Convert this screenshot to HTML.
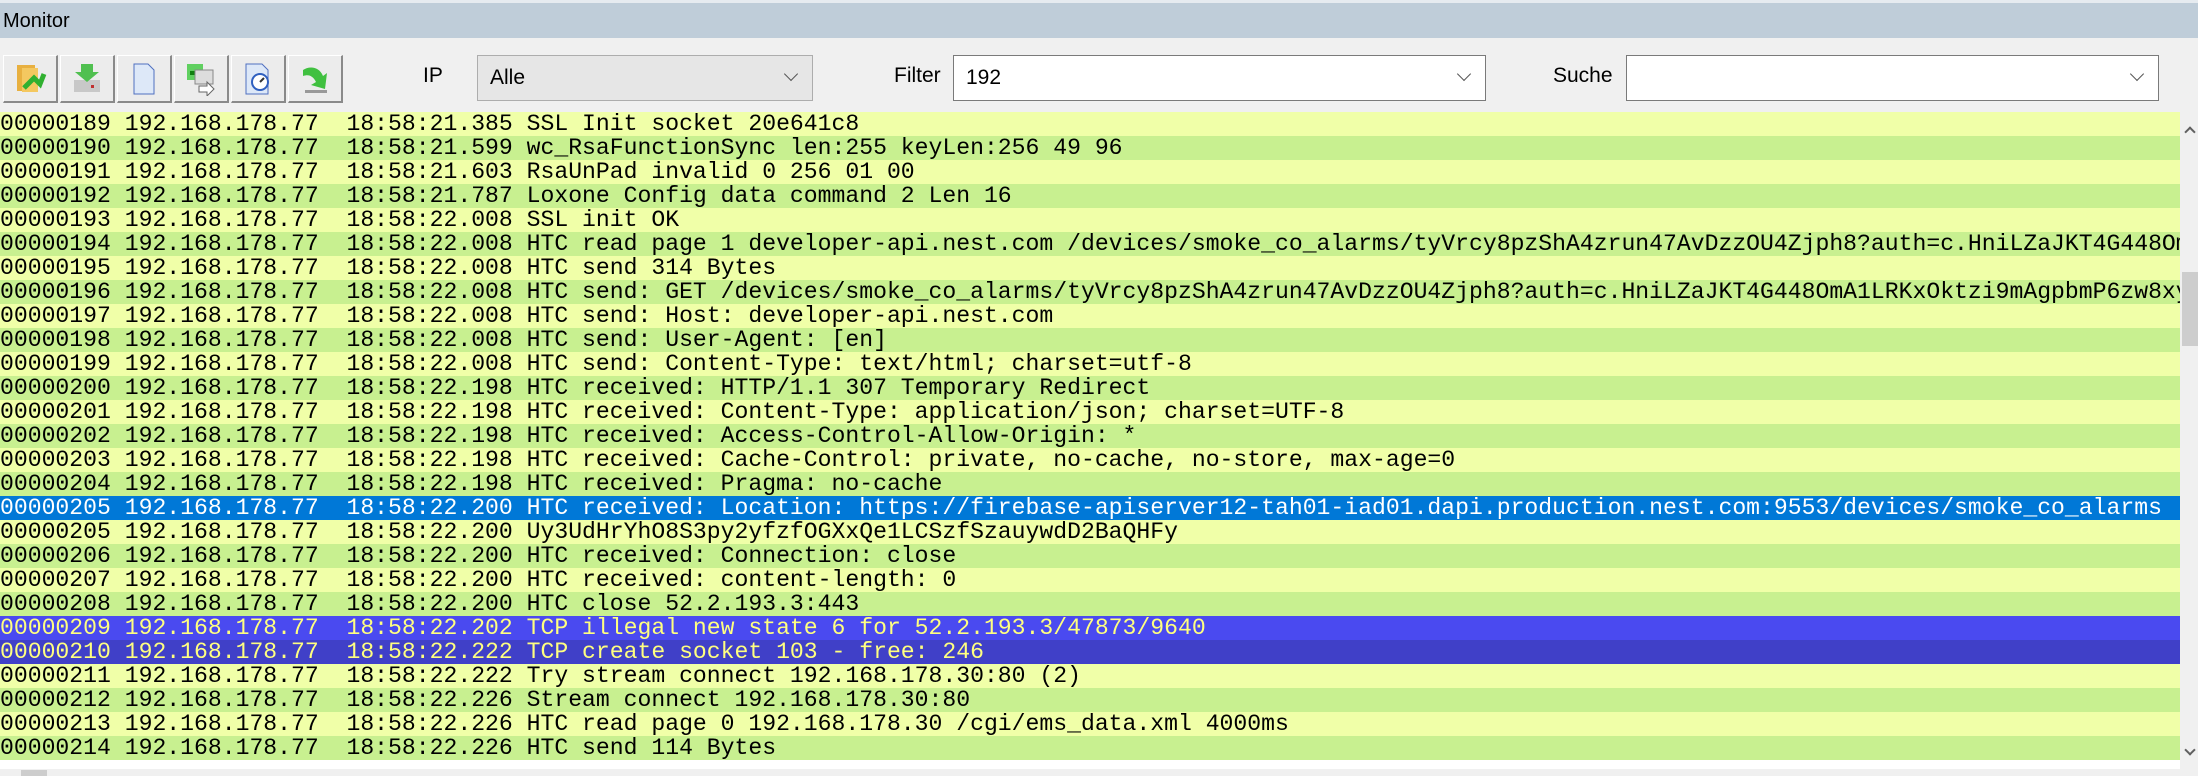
<!DOCTYPE html>
<html><head><meta charset="utf-8"><style>
*{margin:0;padding:0;box-sizing:border-box}
body{width:2198px;height:776px;overflow:hidden;background:#f0f0f0;font-family:"Liberation Sans",sans-serif;position:relative}
.title{position:absolute;left:0;top:3px;width:2198px;height:35px;background:#bfcdd9;font-size:20px;line-height:36px;padding-left:3px;color:#000}
.top{position:absolute;left:0;top:0;width:2198px;height:3px;background:#e6ebf0}
.btn{position:absolute;top:55px;width:55px;height:48px;background:#ececec;border:1px solid #fff;border-right:2px solid #8a8a8a;border-bottom:2px solid #8a8a8a}
.btn svg{position:absolute;left:10px;top:6px}
.lbl{position:absolute;top:64px;font-size:21px;color:#000}
.combo{position:absolute;top:55px;height:46px;border:1px solid #7a7a7a;background:#fff;font-size:21px;line-height:44px;padding-left:12px}
.combo.g{background:#e6e6e6;border-color:#adadad}
.combo .ar{position:absolute;right:16px;top:13px;width:10px;height:10px;border-right:1.5px solid #555;border-bottom:1.5px solid #555;transform:rotate(45deg)}
.list{position:absolute;left:0;top:112px;width:2180px;height:657px;background:#fff;overflow:hidden}
.r{height:24px;line-height:24px;font-family:"Liberation Mono","DejaVu Sans Mono",monospace;font-size:23.1px;white-space:pre;overflow:hidden;color:#000}
.y{background:#f0ffa8}.g2{background:#c8f090}
.s{background:#0078d7;color:#fff}
.b1{background:#4a4af0;color:#ffff80}.b2{background:#4040c8;color:#ffff80}
.sb{position:absolute;left:2180px;top:112px;width:18px;height:657px;background:#f0f0f0}
.thumb{position:absolute;left:2182px;top:272px;width:16px;height:74px;background:#cdcdcd}
.hs{position:absolute;left:0;top:769px;width:2198px;height:7px;background:#f0f0f0}
.ht{position:absolute;left:21px;top:770px;width:26px;height:6px;background:#cdcdcd}
</style></head><body>
<div class="top"></div>
<div class="title">Monitor</div>
<div class="btn" style="left:3px"><svg width="34" height="34"><rect x="3" y="3" width="18" height="26" fill="#e8b040"/><rect x="8" y="6" width="16" height="24" fill="#f4c860"/><path d="M10 26 L20 16 L26 22 L30 12" stroke="#30b030" stroke-width="5" fill="none"/></svg></div>
<div class="btn" style="left:60px"><svg width="34" height="34"><rect x="3" y="18" width="26" height="12" fill="#c8c8c8"/><rect x="20" y="23" width="3" height="3" fill="#c03030"/><path d="M10 2 h12 v8 h6 l-12 10 l-12 -10 h6z" fill="#50c050"/></svg></div>
<div class="btn" style="left:117px"><svg width="34" height="34"><path d="M6 2 h14 l6 6 v24 h-20z" fill="#dde8f8" stroke="#5070c0"/></svg></div>
<div class="btn" style="left:174px"><svg width="34" height="34"><rect x="2" y="2" width="16" height="16" fill="#60d060"/><rect x="5" y="9" width="10" height="4" fill="#108010"/><rect x="10" y="8" width="18" height="14" fill="#ddd" stroke="#888"/><path d="M14 24 h8 v-4 l7 7 l-7 7 v-4 h-8z" fill="#fff" stroke="#666"/></svg></div>
<div class="btn" style="left:231px"><svg width="34" height="34"><path d="M4 2 h16 l6 6 v24 h-22z" fill="#dde8f8" stroke="#5070c0"/><circle cx="18" cy="20" r="8" fill="#fff" stroke="#3060c0" stroke-width="2"/><path d="M18 20 l4 -4" stroke="#333" stroke-width="2"/></svg></div>
<div class="btn" style="left:288px"><svg width="34" height="34"><path d="M4 8 C10 4 20 4 24 14 l4 -3 l-2 16 l-14 -4 l5 -3 C14 14 10 12 4 14z" fill="#40c040"/><rect x="6" y="28" width="22" height="3" fill="#999"/></svg></div>
<div class="lbl" style="left:423px">IP</div>
<div class="combo g" style="left:477px;width:336px">Alle<span class="ar"></span></div>
<div class="lbl" style="left:894px">Filter</div>
<div class="combo" style="left:953px;width:533px">192<span class="ar"></span></div>
<div class="lbl" style="left:1553px">Suche</div>
<div class="combo" style="left:1626px;width:533px"><span class="ar"></span></div>
<div class="list">
<div class="r y">00000189 192.168.178.77  18:58:21.385 SSL Init socket 20e641c8</div>
<div class="r g2">00000190 192.168.178.77  18:58:21.599 wc_RsaFunctionSync len:255 keyLen:256 49 96</div>
<div class="r y">00000191 192.168.178.77  18:58:21.603 RsaUnPad invalid 0 256 01 00</div>
<div class="r g2">00000192 192.168.178.77  18:58:21.787 Loxone Config data command 2 Len 16</div>
<div class="r y">00000193 192.168.178.77  18:58:22.008 SSL init OK</div>
<div class="r g2">00000194 192.168.178.77  18:58:22.008 HTC read page 1 developer-api.nest.com /devices/smoke_co_alarms/tyVrcy8pzShA4zrun47AvDzzOU4Zjph8?auth=c.HniLZaJKT4G448OmA1LRKxOktzi9mAgpbmP6zw8</div>
<div class="r y">00000195 192.168.178.77  18:58:22.008 HTC send 314 Bytes</div>
<div class="r g2">00000196 192.168.178.77  18:58:22.008 HTC send: GET /devices/smoke_co_alarms/tyVrcy8pzShA4zrun47AvDzzOU4Zjph8?auth=c.HniLZaJKT4G448OmA1LRKxOktzi9mAgpbmP6zw8xyz</div>
<div class="r y">00000197 192.168.178.77  18:58:22.008 HTC send: Host: developer-api.nest.com</div>
<div class="r g2">00000198 192.168.178.77  18:58:22.008 HTC send: User-Agent: [en]</div>
<div class="r y">00000199 192.168.178.77  18:58:22.008 HTC send: Content-Type: text/html; charset=utf-8</div>
<div class="r g2">00000200 192.168.178.77  18:58:22.198 HTC received: HTTP/1.1 307 Temporary Redirect</div>
<div class="r y">00000201 192.168.178.77  18:58:22.198 HTC received: Content-Type: application/json; charset=UTF-8</div>
<div class="r g2">00000202 192.168.178.77  18:58:22.198 HTC received: Access-Control-Allow-Origin: *</div>
<div class="r y">00000203 192.168.178.77  18:58:22.198 HTC received: Cache-Control: private, no-cache, no-store, max-age=0</div>
<div class="r g2">00000204 192.168.178.77  18:58:22.198 HTC received: Pragma: no-cache</div>
<div class="r s">00000205 192.168.178.77  18:58:22.200 HTC received: Location: https://firebase-apiserver12-tah01-iad01.dapi.production.nest.com:9553/devices/smoke_co_alarms</div>
<div class="r y">00000205 192.168.178.77  18:58:22.200 Uy3UdHrYhO8S3py2yfzfOGXxQe1LCSzfSzauywdD2BaQHFy</div>
<div class="r g2">00000206 192.168.178.77  18:58:22.200 HTC received: Connection: close</div>
<div class="r y">00000207 192.168.178.77  18:58:22.200 HTC received: content-length: 0</div>
<div class="r g2">00000208 192.168.178.77  18:58:22.200 HTC close 52.2.193.3:443</div>
<div class="r b1">00000209 192.168.178.77  18:58:22.202 TCP illegal new state 6 for 52.2.193.3/47873/9640</div>
<div class="r b2">00000210 192.168.178.77  18:58:22.222 TCP create socket 103 - free: 246</div>
<div class="r y">00000211 192.168.178.77  18:58:22.222 Try stream connect 192.168.178.30:80 (2)</div>
<div class="r g2">00000212 192.168.178.77  18:58:22.226 Stream connect 192.168.178.30:80</div>
<div class="r y">00000213 192.168.178.77  18:58:22.226 HTC read page 0 192.168.178.30 /cgi/ems_data.xml 4000ms</div>
<div class="r g2">00000214 192.168.178.77  18:58:22.226 HTC send 114 Bytes</div>
</div>
<div class="sb"></div>
<div class="thumb"></div>
<div style="position:absolute;left:2186px;top:128px;width:8px;height:8px;border-left:2px solid #606060;border-top:2px solid #606060;transform:rotate(45deg)"></div>
<div style="position:absolute;left:2186px;top:746px;width:8px;height:8px;border-right:2px solid #606060;border-bottom:2px solid #606060;transform:rotate(45deg)"></div>
<div class="hs"></div>
<div class="ht"></div>
</body></html>
